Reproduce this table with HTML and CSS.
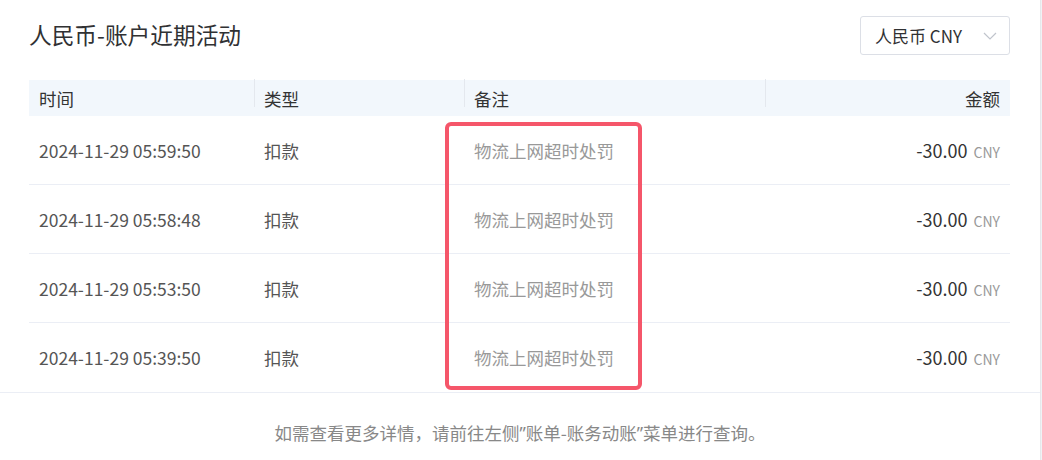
FILE: index.html
```html
<!DOCTYPE html>
<html lang="zh-CN">
<head>
<meta charset="utf-8">
<title>人民币-账户近期活动</title>
<link rel="stylesheet" href="styles.css">
</head>
<body>
<div class="card">
  <div class="top">
    <div class="title">人民币-账户近期活动</div>
    <div class="select">
      <span>人民币 CNY</span>
      <svg class="chev" width="14" height="8" viewBox="0 0 14 8"><path d="M1 1 L7 7 L13 1" fill="none" stroke="#c0c4cc" stroke-width="1.2"/></svg>
    </div>
  </div>
  <div class="table">
    <div class="row head">
      <div class="cell">时间</div>
      <div class="cell div">类型</div>
      <div class="cell div">备注</div>
      <div class="cell div right">金额</div>
    </div>
    <div class="row">
      <div class="cell">2024-11-29 05:59:50</div>
      <div class="cell">扣款</div>
      <div class="cell note">物流上网超时处罚</div>
      <div class="cell right"><span class="amt">-30.00</span><span class="cur">CNY</span></div>
    </div>
    <div class="row">
      <div class="cell">2024-11-29 05:58:48</div>
      <div class="cell">扣款</div>
      <div class="cell note">物流上网超时处罚</div>
      <div class="cell right"><span class="amt">-30.00</span><span class="cur">CNY</span></div>
    </div>
    <div class="row">
      <div class="cell">2024-11-29 05:53:50</div>
      <div class="cell">扣款</div>
      <div class="cell note">物流上网超时处罚</div>
      <div class="cell right"><span class="amt">-30.00</span><span class="cur">CNY</span></div>
    </div>
    <div class="row last">
      <div class="cell">2024-11-29 05:39:50</div>
      <div class="cell">扣款</div>
      <div class="cell note">物流上网超时处罚</div>
      <div class="cell right"><span class="amt">-30.00</span><span class="cur">CNY</span></div>
    </div>
  </div>
  <div class="footer">如需查看更多详情，请前往左侧<span class="q">”</span>账单-账务动账<span class="q">”</span>菜单进行查询。</div>
  <div class="highlight"></div>
</div>
</body>
</html>
```
FILE: styles.css
```css
html, body {
  margin: 0;
  padding: 0;
  background: #f0f2f5;
}
body {
  font-family: "Noto Sans CJK SC", "Noto Sans", sans-serif;
  font-size: 17.5px;
  color: #555;
}
.card {
  position: relative;
  width: 1040px;
  height: 460px;
  background: #fff;
  border-right: 1px solid #e6e8eb;
  overflow: hidden;
}
.top {
  display: flex;
  align-items: center;
  justify-content: space-between;
  padding: 16px 30px 0 29px;
  height: 39px;
  margin-bottom: 25px;
}
.title {
  font-size: 22.7px;
  color: #303133;
  line-height: 1;
}
.select {
  height: 37px;
  border: 1px solid #dcdfe6;
  border-radius: 3px;
  display: flex;
  align-items: center;
  justify-content: space-between;
  padding: 0 12px 0 14px;
  box-sizing: content-box;
  width: 122px;
  color: #303133;
  font-size: 17px;
}
.chev { display: block; }
.table {
  margin: 0 30px 0 29px;
}
.row {
  display: grid;
  grid-template-columns: 225px 210px 301px 1fr;
  height: 68px;
  border-bottom: 1px solid #ebeef5;
  align-items: center;
}
.row.last { border-bottom: none; }
.row.head {
  height: 36px;
  background: #f2f7fc;
  border-bottom: none;
  color: #333;
}
.cell {
  position: relative;
  padding: 1px 10px 0;
  white-space: nowrap;
  line-height: 1;
}
.cell.div::before {
  content: "";
  position: absolute;
  left: 0;
  top: -10px;
  height: 28px;
  width: 1px;
  background: #e4e8ee;
}
.right { text-align: right; }
.note { color: #999; }
.amt { color: #333; font-size: 18px; }
.cur { color: #999; font-size: 14px; margin-left: 6px; }
.footer {
  border-top: 1px solid #ebeef5;
  margin-top: 1px;
  text-align: center;
  color: #888;
  padding-top: 27px;
}
.q {
  font-family: "Noto Sans", sans-serif;
}
.highlight {
  position: absolute;
  left: 445px;
  top: 122px;
  width: 189px;
  height: 260px;
  border: 4px solid #f5566a;
  border-radius: 6px;
}
```
